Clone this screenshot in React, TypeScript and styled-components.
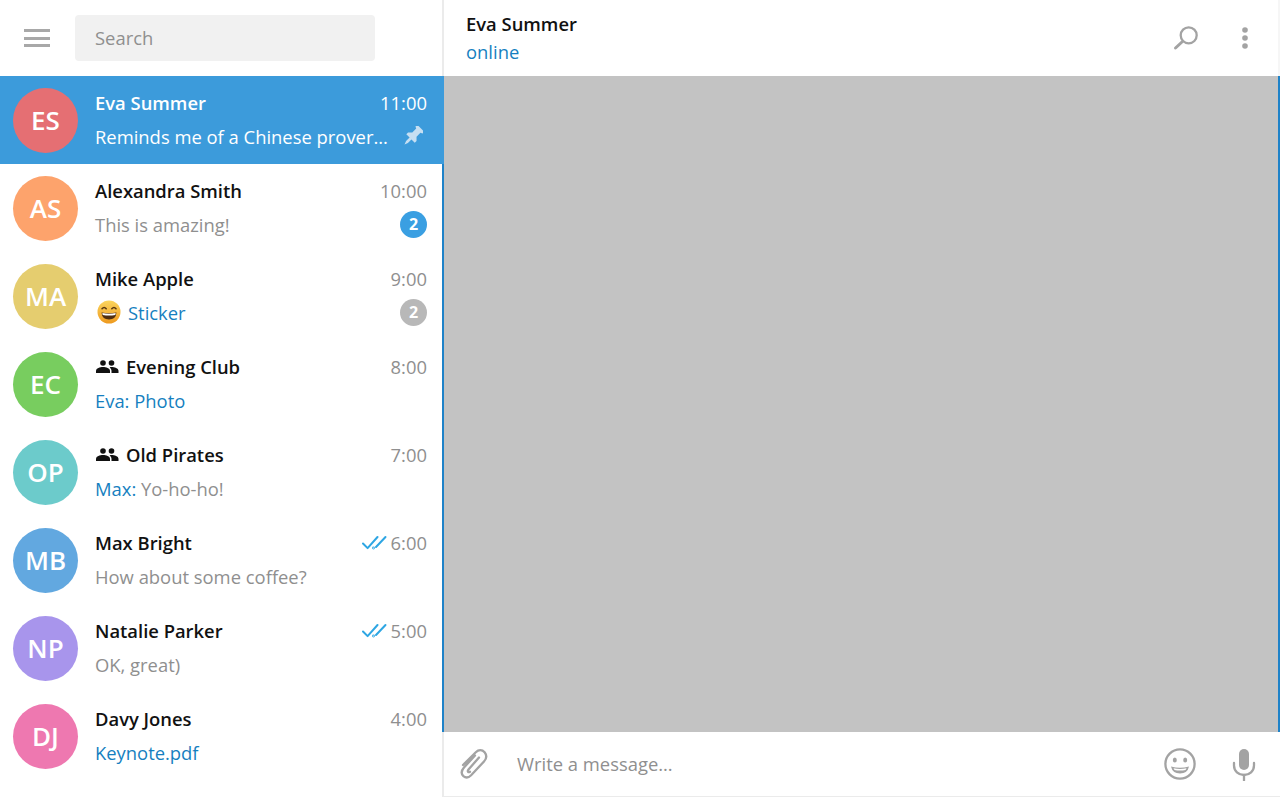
import React, { FC } from "react";
import styled, { createGlobalStyle } from "styled-components";

const GlobalStyle = createGlobalStyle`
  html, body {
    margin: 0;
    padding: 0;
    background: #fff;
    font-family: "Open Sans", "Liberation Sans", sans-serif;
  }
  * { box-sizing: border-box; }
`;

const colors = {
  blue: "#3c9bdb",
  link: "#167fc0",
  grey: "#8f8f8f",
  icon: "#a3a3a3",
  line: "#ebebeb",
  text: "#111111"
};

const Page = styled.div`
  width: 1280px;
  height: 797px;
  display: flex;
  overflow: hidden;
`;

const Sidebar = styled.aside`
  width: 442px;
  flex-shrink: 0;
  display: flex;
  flex-direction: column;
`;

const SidebarHeader = styled.div`
  height: 76px;
  display: flex;
  align-items: center;
  padding-left: 24px;
  gap: 25px;
`;

const MenuButton = styled.div`
  width: 26px;
  height: 18px;
  display: flex;
  flex-direction: column;
  justify-content: space-between;
  span {
    display: block;
    height: 3px;
    background: #a8a8a8;
  }
`;

const SearchBox = styled.div`
  width: 300px;
  height: 46px;
  border-radius: 4px;
  background: #f1f1f1;
  color: ${colors.grey};
  font-size: 18.4px;
  line-height: 46px;
  padding-left: 20px;
`;

const ChatList = styled.div`
  flex: 1;
`;

const Row = styled.div<{ $active?: boolean }>`
  position: relative;
  z-index: 1;
  height: 88px;
  display: flex;
  align-items: center;
  padding-left: 13px;
  gap: 17px;
  margin-right: ${p => (p.$active ? "-2px" : "0")};
  padding-right: ${p => (p.$active ? "17px" : "15px")};
  background: ${p => (p.$active ? colors.blue : "#fff")};
  color: ${p => (p.$active ? "#fff" : colors.text)};
`;

const Avatar = styled.div<{ $color: string }>`
  width: 65px;
  height: 65px;
  border-radius: 50%;
  flex-shrink: 0;
  background: ${p => p.$color};
  color: #fff;
  font-size: 26px;
  font-weight: 600;
  display: flex;
  align-items: center;
  justify-content: center;
`;

const RowBody = styled.div`
  flex: 1;
  min-width: 0;
  display: flex;
  flex-direction: column;
  gap: 10px;
  padding-bottom: 2px;
`;

const RowLine = styled.div`
  display: flex;
  align-items: center;
  justify-content: space-between;
  height: 24px;
`;

const Name = styled.div`
  display: flex;
  align-items: center;
  gap: 7px;
  font-size: 18.4px;
  font-weight: 600;
`;

const Time = styled.div<{ $active?: boolean }>`
  display: flex;
  align-items: center;
  gap: 4px;
  font-size: 18.4px;
  color: ${p => (p.$active ? "#fff" : colors.grey)};
`;

const Preview = styled.div<{ $active?: boolean }>`
  display: flex;
  align-items: center;
  gap: 7px;
  font-size: 18.4px;
  white-space: nowrap;
  color: ${p => (p.$active ? "#fff" : colors.grey)};
`;

const Accent = styled.span`
  color: ${colors.link};
`;

const Badge = styled.div<{ $muted?: boolean }>`
  width: 27px;
  height: 27px;
  border-radius: 50%;
  background: ${p => (p.$muted ? "#b8b8b8" : "#3a9fe2")};
  color: #fff;
  font-size: 16px;
  font-weight: 700;
  display: flex;
  align-items: center;
  justify-content: center;
`;

const PinSlot = styled.div`
  display: flex;
  margin-right: 4px;
`;

const EmojiSlot = styled.span`
  display: flex;
  margin-left: 2px;
`;

const Main = styled.main`
  flex: 1;
  display: flex;
  flex-direction: column;
`;

const ChatHeader = styled.header`
  height: 76px;
  display: flex;
  align-items: center;
  justify-content: space-between;
  padding: 0 30px 0 22px;
  border-left: 2px solid ${colors.line};
  border-right: 2px solid #f6f6f6;
`;

const PeerName = styled.div`
  font-size: 18.4px;
  font-weight: 600;
  color: ${colors.text};
  line-height: 24px;
`;

const PeerStatus = styled.div`
  font-size: 18.4px;
  color: ${colors.link};
  line-height: 24px;
  margin-top: 4px;
`;

const IconRow = styled.div<{ $gap: number }>`
  display: flex;
  align-items: center;
  gap: ${p => p.$gap}px;
`;

const Messages = styled.div`
  flex: 1;
  background: #c3c3c3;
  border-left: 2px solid #1e82c8;
  border-right: 2px solid #1e82c8;
`;

const Composer = styled.footer`
  height: 65px;
  display: flex;
  align-items: center;
  padding: 0 24px 0 14px;
  border-left: 2px solid ${colors.line};
  border-bottom: 1px solid ${colors.line};
`;

const Placeholder = styled.div`
  flex: 1;
  font-size: 18.4px;
  color: ${colors.grey};
  padding: 0 0 2px 29px;
`;

const PeopleIcon: FC = () => (
  <svg width="24" height="13" viewBox="0 0 24 13" fill={colors.text}>
    <circle cx="8" cy="3" r="2.800" />
    <circle cx="16.500" cy="3" r="2.800" />
    <path d="M1 13v-2.200C1 8.200 5 7 8 7s7 1.200 7 3.800V13z" />
    <path d="M16.500 13v-2.200c0-1.400-.7-2.600-1.900-3.400.6-.3 1.300-.4 1.900-.4 3 0 7 1.200 7 3.800V13z" />
  </svg>
);

const DoubleCheck: FC = () => (
  <svg width="25" height="15" viewBox="0 0 25 15" fill="none" stroke="#2ea6e3" strokeWidth="2" strokeLinecap="round" strokeLinejoin="round">
    <path d="M1 8.500l4.600 4.600L15.500 2" />
    <path d="M14 12l9.500-10" />
    <circle cx="11.500" cy="13" r=".4" />
  </svg>
);

const PinIcon: FC = () => (
  <svg width="20" height="20" viewBox="0 0 20 20" fill="#c6dff2">
    <path transform="rotate(45 10 10)" d="M5 -1h10v2.500l-2 1v5.500l3 3v2.500h-4.700v5l-1.300 3.500-1.300-3.500v-5H4v-2.500l3-3V2.500l-2-1z" />
  </svg>
);

const GrinEmoji: FC = () => (
  <svg width="24" height="24" viewBox="0 0 24 24">
    <defs>
      <linearGradient id="grin" x1="0" y1="0" x2="0" y2="1">
        <stop offset="0" stopColor="#fbd55e" />
        <stop offset="1" stopColor="#ee9a1f" />
      </linearGradient>
    </defs>
    <circle cx="12" cy="12" r="11.500" fill="url(#grin)" />
    <path d="M5 8.800q2.200-2.600 4.200 0M14.800 8.800q2.200-2.600 4.200 0" fill="none" stroke="#5b3a12" strokeWidth="1.500" strokeLinecap="round" />
    <path d="M4.500 12.500q7.500 1.600 15 0q-.6 7-7.500 7t-7.500-7z" fill="#4e2d10" />
    <path d="M5.300 13q6.700 1.300 13.400 0l-.4 2q-6.300 1.200-12.600 0z" fill="#fff" />
  </svg>
);

const SearchIcon: FC = () => (
  <svg width="28" height="28" viewBox="0 0 28 28" fill="none" stroke={colors.icon} strokeLinecap="round">
    <circle cx="16.700" cy="11.300" r="8" strokeWidth="2.300" />
    <path d="M10.500 17.500L3.500 24" strokeWidth="3" />
  </svg>
);

const DotsIcon: FC = () => (
  <svg width="6" height="24" viewBox="0 0 6 24" fill={colors.icon}>
    <circle cx="3" cy="4" r="2.800" />
    <circle cx="3" cy="12" r="2.800" />
    <circle cx="3" cy="20" r="2.800" />
  </svg>
);

const ClipIcon: FC = () => (
  <svg width="30" height="32" viewBox="0 0 30 32" fill="none" stroke={colors.icon} strokeWidth="2.300" strokeLinecap="round">
    <path d="M17 7.500L6 19.500c-3 3.500-2.800 6.500-.6 8.600 2.200 2 5 1.900 7.700-.8L26 13.500c3-3.300 2.800-6.500.6-9.300-2.500-2.800-6-2.800-8.800 0L5 17" />
    <path d="M21 9.500L10.500 21.500c-1.500 1.800-.2 3.300 1.500 2.300" />
  </svg>
);

const SmileIcon: FC = () => (
  <svg width="32" height="32" viewBox="0 0 32 32">
    <circle cx="16" cy="16" r="14.600" fill="none" stroke={colors.icon} strokeWidth="2.300" />
    <ellipse cx="10.800" cy="12" rx="2" ry="2.600" fill={colors.icon} />
    <ellipse cx="21.200" cy="12" rx="2" ry="2.600" fill={colors.icon} />
    <path d="M7 18.500q9 2.600 18 0q-1.500 7-9 7t-9-7z" fill={colors.icon} />
    <path d="M9.500 20.300q6.500 1.300 13 0q-.5 1.300-1 1.800q-5.500 1-11 0z" fill="#fff" />
  </svg>
);

const MicIcon: FC = () => (
  <svg width="24" height="33" viewBox="0 0 24 33" fill="none">
    <rect x="7" y="1" width="10" height="21" rx="5" fill={colors.icon} />
    <path d="M2 15v2.500c0 5.500 4.500 9.500 10 9.500s10-4 10-9.500V15" stroke={colors.icon} strokeWidth="2.300" strokeLinecap="round" />
    <path d="M12 27v5.500" stroke={colors.icon} strokeWidth="2.300" strokeLinecap="round" />
  </svg>
);

interface Chat {
  initials: string;
  color: string;
  name: string;
  time: string;
  group?: boolean;
  read?: boolean;
  preview: React.ReactNode;
  badge?: "blue" | "grey";
}

const chats: Chat[] = [
  { initials: "AS", color: "#fda36c", name: "Alexandra Smith", time: "10:00", preview: "This is amazing!", badge: "blue" },
  { initials: "MA", color: "#e5cd6f", name: "Mike Apple", time: "9:00", preview: <><EmojiSlot><GrinEmoji /></EmojiSlot><Accent>Sticker</Accent></>, badge: "grey" },
  { initials: "EC", color: "#78cd5f", name: "Evening Club", time: "8:00", group: true, preview: <Accent>Eva: Photo</Accent> },
  { initials: "OP", color: "#6ccbcb", name: "Old Pirates", time: "7:00", group: true, preview: <span><Accent>Max:</Accent> Yo-ho-ho!</span> },
  { initials: "MB", color: "#62a8e0", name: "Max Bright", time: "6:00", read: true, preview: "How about some coffee?" },
  { initials: "NP", color: "#a895ec", name: "Natalie Parker", time: "5:00", read: true, preview: "OK, great)" },
  { initials: "DJ", color: "#ee78b0", name: "Davy Jones", time: "4:00", preview: <Accent>Keynote.pdf</Accent> }
];

const App: FC = () => (
  <Page>
    <GlobalStyle />
    <Sidebar>
      <SidebarHeader>
        <MenuButton>
          <span />
          <span />
          <span />
        </MenuButton>
        <SearchBox>Search</SearchBox>
      </SidebarHeader>
      <ChatList>
        <Row $active>
          <Avatar $color="#e56f73">ES</Avatar>
          <RowBody>
            <RowLine>
              <Name>Eva Summer</Name>
              <Time $active>11:00</Time>
            </RowLine>
            <RowLine>
              <Preview $active>Reminds me of a Chinese prover...</Preview>
              <PinSlot>
                <PinIcon />
              </PinSlot>
            </RowLine>
          </RowBody>
        </Row>
        {chats.map(chat => (
          <Row key={chat.initials}>
            <Avatar $color={chat.color}>{chat.initials}</Avatar>
            <RowBody>
              <RowLine>
                <Name>
                  {chat.group && <PeopleIcon />}
                  {chat.name}
                </Name>
                <Time>
                  {chat.read && <DoubleCheck />}
                  {chat.time}
                </Time>
              </RowLine>
              <RowLine>
                <Preview>{chat.preview}</Preview>
                {chat.badge && <Badge $muted={chat.badge === "grey"}>2</Badge>}
              </RowLine>
            </RowBody>
          </Row>
        ))}
      </ChatList>
    </Sidebar>
    <Main>
      <ChatHeader>
        <div>
          <PeerName>Eva Summer</PeerName>
          <PeerStatus>online</PeerStatus>
        </div>
        <IconRow $gap={42}>
          <SearchIcon />
          <DotsIcon />
        </IconRow>
      </ChatHeader>
      <Messages />
      <Composer>
        <ClipIcon />
        <Placeholder>Write a message...</Placeholder>
        <IconRow $gap={36}>
          <SmileIcon />
          <MicIcon />
        </IconRow>
      </Composer>
    </Main>
  </Page>
);

export default App;
